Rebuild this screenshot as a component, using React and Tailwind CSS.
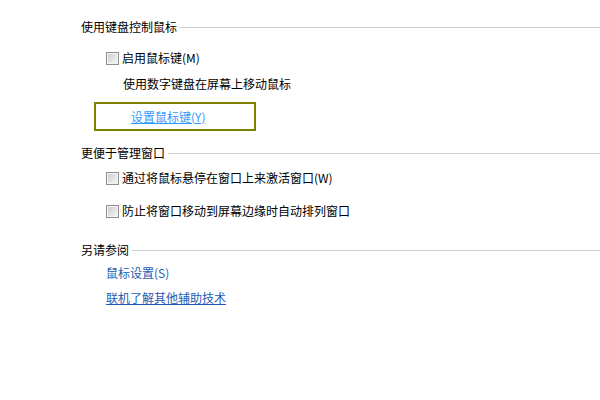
import React from "react";

function Checkbox() {
  return (
    <div className="w-[13px] h-[13px] border border-[#8e8f8f] bg-[#f4f4f4] p-px mr-[3px] shrink-0">
      <div className="w-full h-full bg-linear-to-br from-[#cfcfcf] to-[#f5f5f5]" />
    </div>
  );
}

function Heading({ children, className = "" }) {
  return (
    <div className={"flex items-center h-5 " + className}>
      <span className="text-[12px] leading-5 text-black whitespace-nowrap">{children}</span>
      <div className="flex-1 h-px bg-[#cdcdcd] ml-[3px]" />
    </div>
  );
}

function CheckRow({ children, className = "" }) {
  return (
    <div className={"flex items-center h-5 pl-[25px] " + className}>
      <Checkbox />
      <span className="text-[12px] leading-5 text-black whitespace-nowrap">{children}</span>
    </div>
  );
}

export default function App() {
  return (
    <div
      className="w-[600px] h-[400px] bg-white overflow-hidden pl-[81px] pt-[17px]"
      style={{ fontFamily: '"Noto Sans CJK SC", "Noto Sans", sans-serif' }}
    >
      <Heading>使用键盘控制鼠标</Heading>
      <CheckRow className="mt-[11px]">启用鼠标键(M)</CheckRow>
      <div className="mt-[6px] h-5 pl-[42px] text-[12px] leading-5 text-black whitespace-nowrap">
        使用数字键盘在屏幕上移动鼠标
      </div>
      <div className="mt-[8px] ml-[13px] w-[162px] h-[29px] border-2 border-[#808000] flex items-center pl-[35px]">
        <span className="text-[12px] leading-5 text-[#3399ff] underline whitespace-nowrap">设置鼠标键(Y)</span>
      </div>
      <Heading className="mt-[12px]">更便于管理窗口</Heading>
      <CheckRow className="mt-[5px]">通过将鼠标悬停在窗口上来激活窗口(W)</CheckRow>
      <CheckRow className="mt-[13px]">防止将窗口移动到屏幕边缘时自动排列窗口</CheckRow>
      <Heading className="mt-[19px]">另请参阅</Heading>
      <div className="mt-[3px] h-5 pl-[25px] text-[12px] leading-5 text-[#1e5cb3] whitespace-nowrap">
        鼠标设置(S)
      </div>
      <div className="mt-[5px] h-5 pl-[25px] text-[12px] leading-5 whitespace-nowrap">
        <span className="text-[#1e5cb3] underline">联机了解其他辅助技术</span>
      </div>
    </div>
  );
}
